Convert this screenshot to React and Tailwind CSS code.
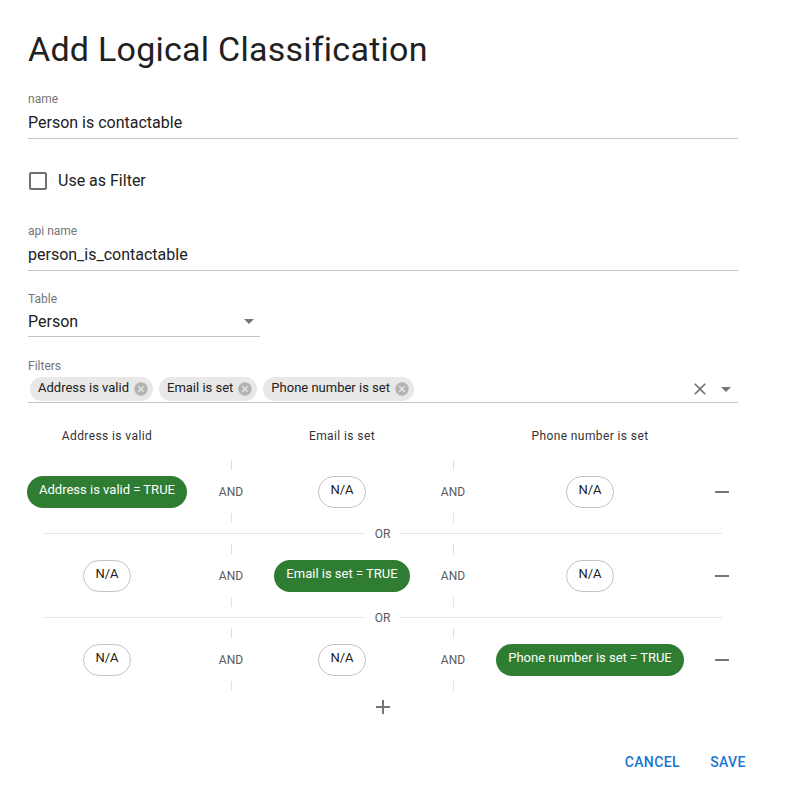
import React from "react";

const Icon = ({ d, size = 24, className = "" }) => (
  <svg width={size} height={size} viewBox="0 0 24 24" className={className} fill="currentColor">
    <path d={d} />
  </svg>
);

const P = {
  remove: "M19 13H5v-2h14v2z",
  add: "M19 13h-6v6h-2v-6H5v-2h6V5h2v6h6v2z",
  drop: "M7 10l5 5 5-5z",
  close:
    "M19 6.41 17.59 5 12 10.59 6.41 5 5 6.41 10.59 12 5 17.59 6.41 19 12 13.41 17.59 19 19 17.59 13.41 12z",
  cancel:
    "M12 2C6.47 2 2 6.47 2 12s4.47 10 10 10 10-4.47 10-10S17.53 2 12 2zm5 13.59L15.59 17 12 13.41 8.41 17 7 15.59 10.59 12 7 8.41 8.41 7 12 10.59 15.59 7 17 8.41 13.41 12 17 15.59z",
};

function Field({ label, value, className = "" }) {
  return (
    <div className={className}>
      <div className="text-[12px] leading-[14px] text-[#757575]">{label}</div>
      <div className="h-[33px] flex items-center text-[16px] leading-[23px] border-b border-[#c4c4c4]">
        {value}
      </div>
    </div>
  );
}

function SmallChip({ label }) {
  return (
    <div className="h-[24px] rounded-full bg-[#e8e8e8] flex items-center pl-[8px] pr-[4px] text-[13px] text-[#212121]">
      <span className="pb-[2px]">{label}</span>
      <Icon d={P.cancel} size={16} className="ml-[4px] text-[#b3b3b3]" />
    </div>
  );
}

function Green({ label }) {
  return (
    <div className="h-[32px] rounded-full bg-[#2e7d32] text-white text-[13px] flex items-center px-[12px] pb-[3px] whitespace-nowrap">
      {label}
    </div>
  );
}

function NA() {
  return (
    <div className="h-[32px] rounded-full border border-[#c4c4c4] text-[#212121] text-[13px] flex items-center px-[11px] pb-[3px]">
      N/A
    </div>
  );
}

function And() {
  return (
    <div className="flex flex-col items-center h-full">
      <div className="w-px h-[10px] bg-[#e0e0e0]" />
      <div className="flex-1 flex items-center text-[12px] text-[#5a5a5a]">AND</div>
      <div className="w-px h-[10px] bg-[#e0e0e0]" />
    </div>
  );
}

function Row({ cells }) {
  return (
    <div className="grid grid-cols-[158px_90px_132px_90px_184px_80px] h-[63px]">
      <div className="flex items-center justify-center">{cells[0]}</div>
      <And />
      <div className="flex items-center justify-center">{cells[1]}</div>
      <And />
      <div className="flex items-center justify-center">{cells[2]}</div>
      <div className="flex items-center justify-center text-[#757575]">
        <Icon d={P.remove} />
      </div>
    </div>
  );
}

function Or() {
  return (
    <div className="ml-[15px] w-[679px] h-[21px] flex items-center">
      <div className="flex-1 h-px bg-[#e6e6e6]" />
      <div className="px-[9.5px] text-[12px] text-[#5a5a5a]">OR</div>
      <div className="flex-1 h-px bg-[#e6e6e6]" />
    </div>
  );
}

export default function App() {
  return (
    <div className="w-[789px] h-[809px] bg-white font-['Roboto',sans-serif] text-[#212121] flex flex-col">
      <div className="pl-[28px] pt-[28px] w-[738px]">
        <h1 className="text-[34px] leading-[42px] font-normal tracking-[0.25px]">Add Logical Classification</h1>
        <Field className="mt-[22px]" label="name" value="Person is contactable" />
        <div className="mt-[33px] h-[18px] flex items-center">
          <div className="ml-[1px] w-[18px] h-[18px] border-2 border-[#707070] rounded-[2px]" />
          <span className="ml-[11px] text-[16px]">Use as Filter</span>
        </div>
        <Field className="mt-[34px]" label="api name" value="person_is_contactable" />
        <div className="mt-[21px] w-[232px]">
          <div className="text-[12px] leading-[14px] text-[#757575]">Table</div>
          <div className="h-[31px] flex items-center justify-between text-[16px] leading-[23px] border-b border-[#c4c4c4]">
            <span>Person</span>
            <Icon d={P.drop} className="text-[#757575] mr-[-1px]" />
          </div>
        </div>
        <div className="mt-[22px]">
          <div className="text-[12px] leading-[14px] text-[#757575]">Filters</div>
          <div className="pt-[4px] pb-[1px] flex items-center border-b border-[#c4c4c4]">
            <div className="ml-[2px] flex items-center gap-[6px]">
              <SmallChip label="Address is valid" />
              <SmallChip label="Email is set" />
              <SmallChip label="Phone number is set" />
            </div>
            <div className="ml-auto flex items-center gap-[4px] text-[#757575]">
              <Icon d={P.close} size={20} />
              <Icon d={P.drop} />
            </div>
          </div>
        </div>
      </div>

      <div className="pl-[28px] mt-[23px]">
        <div className="grid grid-cols-[158px_90px_132px_90px_184px_80px] h-[20px] items-center text-[12px] tracking-[0.4px] text-[#333]">
          <div className="text-center">Address is valid</div>
          <div />
          <div className="text-center">Email is set</div>
          <div />
          <div className="text-center">Phone number is set</div>
          <div />
        </div>
        <div className="mt-[14px]">
          <Row cells={[<Green label="Address is valid = TRUE" />, <NA />, <NA />]} />
          <Or />
          <Row cells={[<NA />, <Green label="Email is set = TRUE" />, <NA />]} />
          <Or />
          <Row cells={[<NA />, <NA />, <Green label="Phone number is set = TRUE" />]} />
        </div>
        <div className="mt-[4px] ml-[15px] w-[679px] flex justify-center text-[#757575]">
          <Icon d={P.add} />
        </div>
      </div>

      <div className="mt-[25px] flex justify-end pr-[29px] gap-[8px]">
        <button className="px-[8px] py-[6px] min-w-[64px] text-[14px] leading-[24px] font-medium tracking-[0.4px] text-[#1976d2]">
          CANCEL
        </button>
        <button className="px-[8px] py-[6px] min-w-[64px] text-[14px] leading-[24px] font-medium tracking-[0.4px] text-[#1976d2]">
          SAVE
        </button>
      </div>
    </div>
  );
}
